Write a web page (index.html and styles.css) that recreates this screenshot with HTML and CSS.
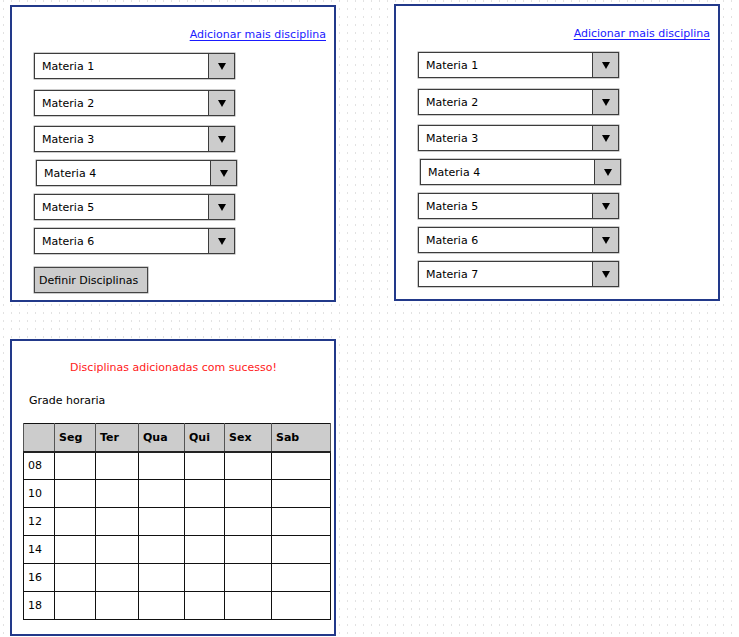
FILE: index.html
```html
<!DOCTYPE html>
<html lang="pt">
<head>
<meta charset="utf-8">
<title>Grade horaria</title>
<link rel="stylesheet" href="styles.css">
</head>
<body>
<div class="board">
  <section class="panel panel-first">
    <div class="link-row"><a class="add-link" href="#">Adicionar mais disciplina</a></div>
    <div class="dd-list">
      <div class="dd"><span class="dd-label">Materia 1</span><span class="dd-btn"><span class="tri"></span></span></div>
      <div class="dd"><span class="dd-label">Materia 2</span><span class="dd-btn"><span class="tri"></span></span></div>
      <div class="dd"><span class="dd-label">Materia 3</span><span class="dd-btn"><span class="tri"></span></span></div>
      <div class="dd"><span class="dd-label">Materia 4</span><span class="dd-btn"><span class="tri"></span></span></div>
      <div class="dd"><span class="dd-label">Materia 5</span><span class="dd-btn"><span class="tri"></span></span></div>
      <div class="dd"><span class="dd-label">Materia 6</span><span class="dd-btn"><span class="tri"></span></span></div>
    </div>
    <button class="define-btn" type="button">Definir Disciplinas</button>
  </section>

  <section class="panel">
    <div class="link-row"><a class="add-link" href="#">Adicionar mais disciplina</a></div>
    <div class="dd-list">
      <div class="dd"><span class="dd-label">Materia 1</span><span class="dd-btn"><span class="tri"></span></span></div>
      <div class="dd"><span class="dd-label">Materia 2</span><span class="dd-btn"><span class="tri"></span></span></div>
      <div class="dd"><span class="dd-label">Materia 3</span><span class="dd-btn"><span class="tri"></span></span></div>
      <div class="dd"><span class="dd-label">Materia 4</span><span class="dd-btn"><span class="tri"></span></span></div>
      <div class="dd"><span class="dd-label">Materia 5</span><span class="dd-btn"><span class="tri"></span></span></div>
      <div class="dd"><span class="dd-label">Materia 6</span><span class="dd-btn"><span class="tri"></span></span></div>
      <div class="dd"><span class="dd-label">Materia 7</span><span class="dd-btn"><span class="tri"></span></span></div>
    </div>
  </section>

  <section class="panel panel-grid">
    <p class="success">Disciplinas adicionadas com sucesso!</p>
    <p class="grid-title">Grade horaria</p>
    <table class="schedule">
      <colgroup>
        <col class="c0"><col class="c1"><col class="c2"><col class="c3"><col class="c4"><col class="c5"><col class="c6">
      </colgroup>
      <thead>
        <tr><th></th><th>Seg</th><th>Ter</th><th>Qua</th><th>Qui</th><th>Sex</th><th>Sab</th></tr>
      </thead>
      <tbody>
        <tr><td>08</td><td></td><td></td><td></td><td></td><td></td><td></td></tr>
        <tr><td>10</td><td></td><td></td><td></td><td></td><td></td><td></td></tr>
        <tr><td>12</td><td></td><td></td><td></td><td></td><td></td><td></td></tr>
        <tr><td>14</td><td></td><td></td><td></td><td></td><td></td><td></td></tr>
        <tr><td>16</td><td></td><td></td><td></td><td></td><td></td><td></td></tr>
        <tr><td>18</td><td></td><td></td><td></td><td></td><td></td><td></td></tr>
      </tbody>
    </table>
  </section>
</div>
</body>
</html>
```

FILE: styles.css
```css
html, body {
  margin: 0;
  padding: 0;
}

body {
  width: 739px;
  height: 637px;
  overflow: hidden;
  font-family: "DejaVu Sans", "Liberation Sans", sans-serif;
  font-size: 11px;
  color: #000;
  background-color: #fff;
  background-image:
    linear-gradient(to right, #fff 0 3px, transparent 3px 4px, #fff 4px),
    linear-gradient(to bottom, #e2e2e2 0 2px, #fff 2px);
  background-size: 8px 8px, 8px 8px;
}

.board {
  display: grid;
  grid-template-columns: 326px 326px;
  column-gap: 58px;
  row-gap: 37px;
  padding: 4px 0 0 10px;
  align-items: start;
}

.panel {
  box-sizing: border-box;
  height: 297px;
  border: 2px solid #22398a;
  background: #fff;
  padding: 21px 8px 0 22px;
  display: flex;
  flex-direction: column;
  align-items: flex-start;
}

.panel-first {
  margin-top: 1px;
}

.link-row {
  align-self: stretch;
  display: flex;
  justify-content: flex-end;
  line-height: 14px;
  height: 14px;
}

.add-link {
  color: #1a1aff;
  text-decoration: underline;
  text-underline-offset: 2px;
}

.dd-list {
  display: flex;
  flex-direction: column;
  gap: 8px;
  margin-top: 11px;
}

.dd {
  box-sizing: border-box;
  width: 201px;
  height: 26px;
  border: 1px solid #3c3c3c;
  box-shadow: 0 0 0 0.5px #9a9a9a;
  display: flex;
  align-items: stretch;
  background: #fff;
}

.dd:nth-child(2) {
  margin-top: 3px;
}

.dd:nth-child(3) {
  margin-top: 2px;
}

.dd:nth-child(4) {
  margin-left: 2px;
}

.dd-label {
  flex: 1;
  display: flex;
  align-items: center;
  padding-left: 7px;
}

.dd-btn {
  width: 25px;
  background: #cccccc;
  border-left: 1px solid #3c3c3c;
  display: flex;
  align-items: center;
  justify-content: center;
}

.tri {
  width: 0;
  height: 0;
  border-left: 4px solid transparent;
  border-right: 4px solid transparent;
  border-top: 7px solid #000;
}

.define-btn {
  box-sizing: border-box;
  margin-top: 13px;
  width: 114px;
  height: 26px;
  padding: 0 0 0 4px;
  text-align: left;
  font-family: inherit;
  font-size: 11px;
  color: #000;
  background: #cccccc;
  border: 1px solid #444;
  box-shadow: 0 0 0 0.5px #999;
  border-radius: 0;
}

.panel-grid {
  padding: 20px 0 0 11px;
  align-items: stretch;
}

.success {
  margin: 0;
  line-height: 14px;
  text-align: center;
  color: #ff1a1a;
  padding-right: 10px;
}

.grid-title {
  margin: 19px 0 0 6px;
  line-height: 14px;
}

.schedule {
  margin-top: 15px;
  width: 307px;
  border-collapse: collapse;
  table-layout: fixed;
  border: 1px solid #111;
}

.c0 { width: 31px; }
.c1 { width: 41px; }
.c2 { width: 43px; }
.c3 { width: 46px; }
.c4 { width: 40px; }
.c5 { width: 47px; }
.c6 { width: 59px; }

.schedule th,
.schedule td {
  box-sizing: border-box;
  height: 28px;
  padding: 0 0 0 4px;
  text-align: left;
  vertical-align: middle;
  font-size: 11px;
  line-height: 14px;
}

.schedule th {
  background: #cccccc;
  font-weight: bold;
  padding-top: 2px;
  border-left: 1px solid #555;
  border-right: 1px solid #555;
  border-bottom: 2px solid #222;
}

.schedule td {
  border: 1px solid #111;
}
```
